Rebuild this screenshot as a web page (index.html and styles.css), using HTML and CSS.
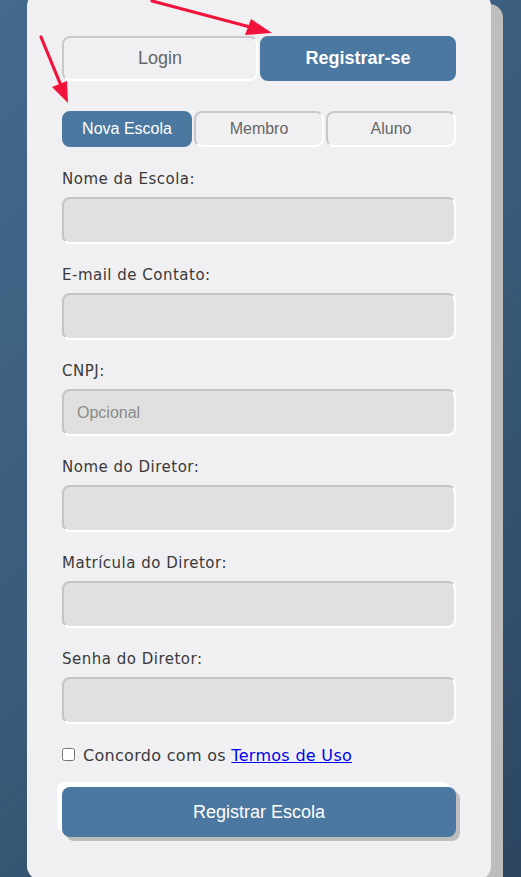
FILE: index.html
```html
<!DOCTYPE html>
<html lang="pt-BR">
<head>
<meta charset="utf-8">
<title>Registrar Escola</title>
<link rel="stylesheet" href="styles.css">
</head>
<body>
<div class="page">
  <div class="card">
    <div class="tabs">
      <button class="tab">Login</button>
      <button class="tab active">Registrar-se</button>
    </div>
    <div class="subtabs">
      <button class="subtab active">Nova Escola</button>
      <button class="subtab">Membro</button>
      <button class="subtab">Aluno</button>
    </div>
    <form class="form">
      <div class="field">
        <label class="label">Nome da Escola:</label>
        <input class="input" type="text">
      </div>
      <div class="field">
        <label class="label">E-mail de Contato:</label>
        <input class="input" type="email">
      </div>
      <div class="field">
        <label class="label">CNPJ:</label>
        <input class="input" type="text" placeholder="Opcional">
      </div>
      <div class="field">
        <label class="label">Nome do Diretor:</label>
        <input class="input" type="text">
      </div>
      <div class="field">
        <label class="label">Matrícula do Diretor:</label>
        <input class="input" type="text">
      </div>
      <div class="field">
        <label class="label">Senha do Diretor:</label>
        <input class="input" type="password">
      </div>
      <div class="terms">
        <input class="check" type="checkbox">
        <span>Concordo com os <a href="#" class="link">Termos de Uso</a></span>
      </div>
      <button type="button" class="submit">Registrar Escola</button>
    </form>
  </div>
  <svg class="arrows" width="521" height="160" viewBox="0 0 521 160">
    <line x1="152" y1="9" x2="252" y2="35.5" stroke="#f2133c" stroke-width="3.2" stroke-linecap="round"/>
    <polygon points="272,41 245,43 251,27" fill="#f2133c"/>
    <line x1="41" y1="45" x2="62" y2="96" stroke="#f2133c" stroke-width="3.2" stroke-linecap="round"/>
    <polygon points="68,111 52,95 67,89" fill="#f2133c"/>
  </svg>
</div>
</body>
</html>
```

FILE: styles.css
```css
html, body {
  margin: 0;
  padding: 0;
}
body {
  height: 877px;
  overflow: hidden;
  background: linear-gradient(135deg, #43698b 0%, #3a5b7a 50%, #2c4660 100%);
  font-family: "DejaVu Sans", "Noto Sans", sans-serif;
}
.page {
  position: relative;
  height: 877px;
}
.card {
  margin: -8px 0 0 27px;
  width: 464px;
  box-sizing: border-box;
  padding: 44px 35px 43px 35px;
  background: #f0f0f2;
  border-radius: 14px;
  box-shadow: 12px 12px 0 #bdbdbd;
}
.tabs {
  display: grid;
  grid-template-columns: 1fr 1fr;
  gap: 2px;
}
.tab, .subtab {
  font-family: "Liberation Sans", Arial, sans-serif;
  border-radius: 8px;
  background: #f0f0f2;
  color: #666;
  border-style: solid;
  border-width: 2px;
  border-color: #c9c9c9 #fff #fff #c9c9c9;
  padding: 0;
  margin: 0;
}
.tab {
  height: 45px;
  font-size: 18px;
}
.tab.active, .subtab.active {
  background: #4a78a0;
  border-color: #4a78a0;
  color: #fff;
}
.tab.active {
  font-weight: bold;
}
.subtabs {
  display: grid;
  grid-template-columns: 1fr 1fr 1fr;
  gap: 2px;
  margin-top: 30px;
  margin-bottom: 21px;
}
.subtab {
  height: 36px;
  font-size: 16px;
}
.form {
  display: flex;
  flex-direction: column;
}
.field {
  display: flex;
  flex-direction: column;
  margin-bottom: 20px;
}
.label {
  font-size: 15px;
  letter-spacing: 0.5px;
  line-height: 22px;
  color: #3a3a3a;
  margin-bottom: 7px;
}
.input {
  height: 47px;
  box-sizing: border-box;
  background: #e0e0e0;
  border-style: solid;
  border-width: 2px;
  border-color: #c4c4c4 #fff #fff #c4c4c4;
  border-radius: 8px;
  padding: 0 13px;
  font-family: "Liberation Sans", Arial, sans-serif;
  font-size: 16px;
  color: #333;
  outline: none;
}
.input::placeholder {
  color: #8a8a8a;
}
.terms {
  display: flex;
  align-items: center;
  margin-top: 0;
  font-size: 16px;
  letter-spacing: 0.3px;
  line-height: 24px;
  color: #3a3a3a;
}
.check {
  width: 13px;
  height: 13px;
  margin: 0 8px 4px 0;
}
.link {
  color: #0000ee;
  text-decoration: underline;
}
.submit {
  margin-top: 19px;
  height: 50px;
  border: none;
  border-radius: 8px;
  background: #4a78a0;
  color: #fff;
  font-family: "Liberation Sans", Arial, sans-serif;
  font-size: 18px;
  box-shadow: -5px -5px 0 #fff, 4px 4px 0 #bdbdbd;
}
.arrows {
  position: absolute;
  left: 0;
  top: 0;
  pointer-events: none;
}
```
